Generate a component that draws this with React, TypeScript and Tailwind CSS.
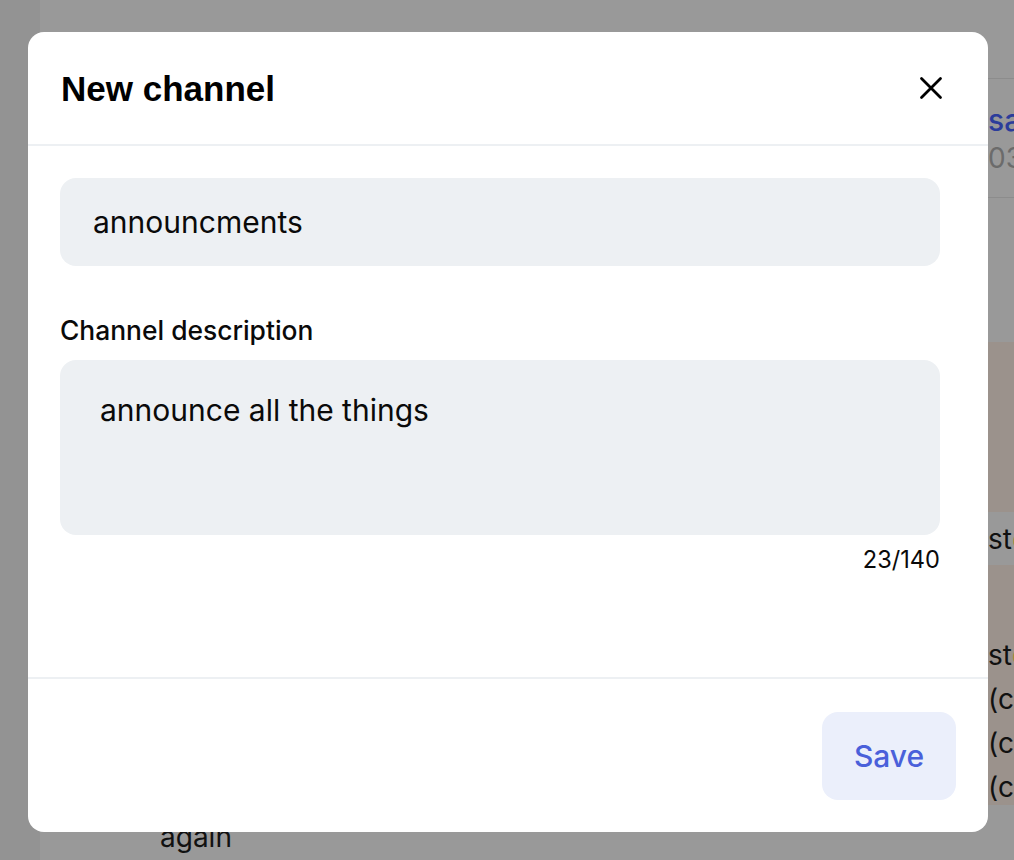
const inter = { fontFamily: 'Inter, "Noto Sans", sans-serif' }

const BackgroundPage = () => {
	return (
		<div className="flex h-full w-full">
			<div className="w-[40px] shrink-0 bg-[#939393]" />
			<div className="flex flex-1 flex-col" style={inter}>
				<div className="h-[78px] shrink-0" />
				<div className="flex h-[120px] shrink-0 flex-col border-y border-[#8c8c8c] pl-[948px] pt-[21px]">
					<p className="text-[30px] leading-[40px] font-medium text-[#2b3c9b] whitespace-nowrap">sa</p>
					<p className="text-[28px] leading-[36px] text-[#6b6b6b] whitespace-nowrap">03</p>
				</div>
				<div className="h-[144px] shrink-0" />
				<div className="h-[170px] shrink-0 bg-[#9b928c]" />
				<div className="flex h-[53px] shrink-0 items-center pl-[948px] text-[28px] text-[#111] whitespace-nowrap">
					st<span className="text-[#a88a3a]">e</span>
				</div>
				<div className="flex h-[240px] shrink-0 flex-col bg-[#9b928c] pl-[948px] pt-[68px] text-[28px] leading-[44px] text-[#111] whitespace-nowrap">
					<p>
						st<span className="text-[#a88a3a]">e</span>
					</p>
					<p>(cl</p>
					<p>(cl</p>
					<p>(cl</p>
				</div>
				<p className="pl-[120px] pt-[12px] text-[28px] leading-[40px] text-[#111]">again</p>
			</div>
		</div>
	)
}

const CloseIcon = () => (
	<svg width="24" height="24" viewBox="0 0 24 24" fill="none">
		<path d="M2.5 2.5 L21.5 21.5 M21.5 2.5 L2.5 21.5" stroke="#000" strokeWidth="2.8" strokeLinecap="round" />
	</svg>
)

const NewChannelModal = () => {
	const name = 'announcments'
	const description = 'announce all the things'

	return (
		<div className="absolute left-[28px] top-[32px] flex h-[800px] w-[960px] flex-col overflow-hidden rounded-[16px] bg-white">
			<div className="flex h-[114px] shrink-0 items-center justify-between border-b-2 border-[#edf0f3] pl-[33px] pr-[45px]">
				<h2
					className="text-[35px] font-bold leading-none text-black"
					style={{ fontFamily: '"Liberation Sans", Arial, sans-serif' }}
				>
					New channel
				</h2>
				<button className="flex items-center justify-center">
					<CloseIcon />
				</button>
			</div>

			<div className="flex flex-1 flex-col pl-[32px] pr-[48px] pt-[32px]" style={inter}>
				<input
					readOnly
					value={name}
					className="h-[88px] w-full rounded-[16px] bg-[#edf0f3] px-[33px] text-[30px] text-[#0a0a0a] outline-none"
					style={inter}
				/>
				<label className="mt-[44px] h-[40px] text-[26.4px] font-medium leading-[40px] text-[#0a0a0a]">
					Channel description
				</label>
				<textarea
					readOnly
					value={description}
					className="mt-[10px] h-[175px] w-full resize-none rounded-[16px] bg-[#edf0f3] px-[40px] pt-[29px] text-[30px] leading-[43px] text-[#0a0a0a] outline-none"
					style={inter}
				/>
				<p className="mt-[10px] text-right text-[23.6px] leading-[30px] text-[#0a0a0a]">23/140</p>
			</div>

			<div className="flex shrink-0 justify-end border-t-2 border-[#edf0f3] pt-[33px] pb-[32px] pr-[32px]">
				<button
					className="h-[88px] w-[134px] rounded-[16px] bg-[#ebeffb] text-[30px] font-medium text-[#4a60da]"
					style={inter}
				>
					Save
				</button>
			</div>
		</div>
	)
}

export default function App() {
	return (
		<div className="relative h-[860px] w-[1014px] overflow-hidden bg-[#999999]">
			<BackgroundPage />
			<NewChannelModal />
		</div>
	)
}
